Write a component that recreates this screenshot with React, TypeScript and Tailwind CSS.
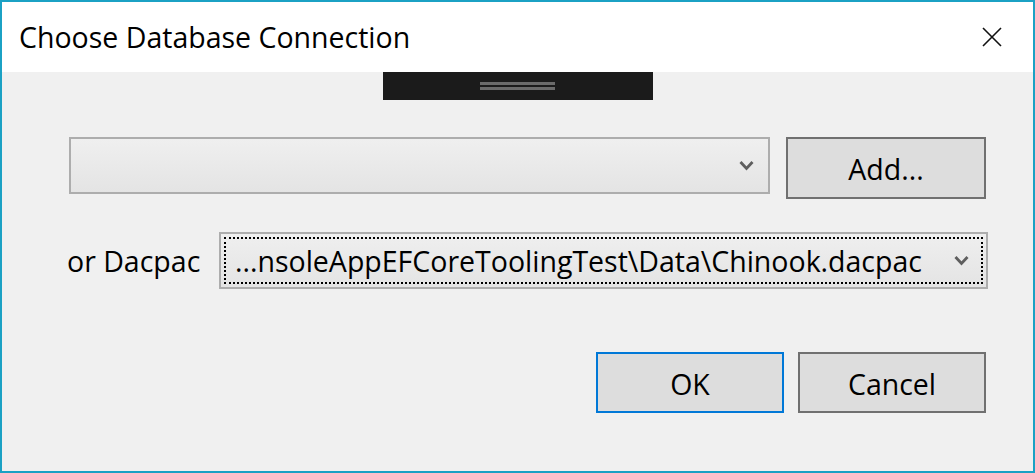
const font = { fontFamily: '"Segoe UI", "Open Sans", "Noto Sans", sans-serif' };

function Chevron() {
  return (
    <svg width="15" height="11" viewBox="0 0 15 11" className="shrink-0">
      <path d="M1.5 2 L7.5 8.5 L13.5 2" fill="none" stroke="#5e5e5e" strokeWidth="2.8" />
    </svg>
  );
}

function WinButton({ label, focused }: { label: string; focused?: boolean }) {
  return (
    <button
      className={
        'flex h-[61px] w-[188px] items-center justify-center border-2 bg-[#dddddd] pt-[3px] text-[28.5px] text-black ' +
        (focused ? 'border-[#0078d7]' : 'border-[#707070]')
      }
    >
      {label}
    </button>
  );
}

export default function App() {
  return (
    <div
      className="flex h-[473px] w-[1035px] flex-col border-2 border-[#1ba1c4] bg-[#f0f0f0] text-black"
      style={font}
    >
      <div className="flex h-[70px] shrink-0 items-center justify-between bg-white pl-[17px] pr-[31px]">
        <span className="text-[28.5px] leading-none">Choose Database Connection</span>
        <svg width="20" height="20" viewBox="0 0 20 20">
          <path d="M1 1 L19 19 M19 1 L1 19" stroke="#111" strokeWidth="1.6" fill="none" />
        </svg>
      </div>

      <div className="flex flex-1 flex-col">
        <div className="flex justify-center">
          <div className="flex h-[28px] w-[270px] flex-col items-center justify-center gap-[2px] bg-[#1b1b1b]">
            <div className="h-[3px] w-[75px] bg-[#6b6b6b]" />
            <div className="h-[3px] w-[75px] bg-[#6b6b6b]" />
          </div>
        </div>

        <div className="mt-[37px] flex items-start pl-[67px]">
          <div className="flex h-[57px] w-[701px] items-center justify-end border-2 border-[#adadad] bg-gradient-to-b from-[#efefef] to-[#e4e4e4] pr-[14px]">
            <Chevron />
          </div>
          <div className="ml-[16px] flex h-[62px] w-[200px] items-center justify-center border-2 border-[#707070] bg-[#dddddd] pt-[2px] text-[28.5px]">
            Add...
          </div>
        </div>

        <div className="mt-[33px] flex items-center pl-[65px]">
          <span className="w-[152px] pt-[2px] text-[28.5px]">or Dacpac</span>
          <div className="h-[57px] w-[769px] border-2 border-[#adadad] bg-gradient-to-b from-[#efefef] to-[#e4e4e4] p-[3px]">
            <div className="flex h-full items-center justify-between border-2 border-dotted border-black pl-[9px] pr-[12px]">
              <span className="pt-[2px] text-[28.5px] leading-none">...nsoleAppEFCoreToolingTest\Data\Chinook.dacpac</span>
              <Chevron />
            </div>
          </div>
        </div>

        <div className="mt-[63px] flex justify-end gap-[14px] pr-[47px]">
          <WinButton label="OK" focused />
          <WinButton label="Cancel" />
        </div>
      </div>
    </div>
  );
}
